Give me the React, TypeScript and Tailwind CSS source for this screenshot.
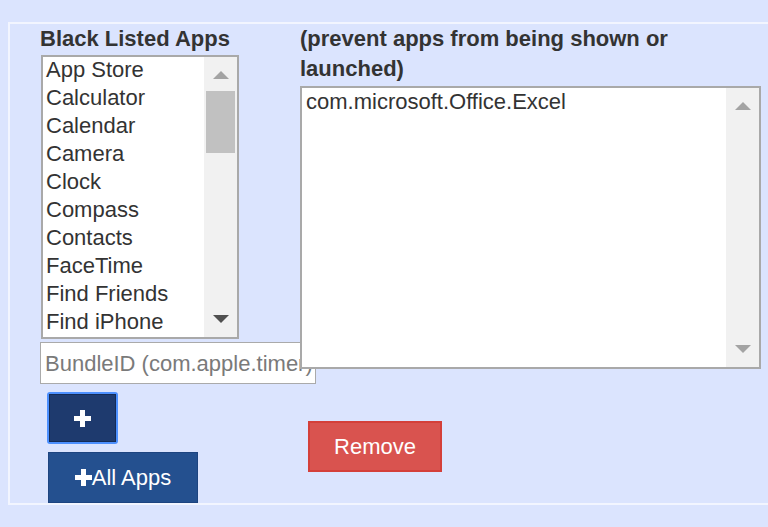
import React from "react";

const apps = [
  "App Store",
  "Calculator",
  "Calendar",
  "Camera",
  "Clock",
  "Compass",
  "Contacts",
  "FaceTime",
  "Find Friends",
  "Find iPhone",
];

function Arrow({ up, dark }: { up?: boolean; dark?: boolean }) {
  return (
    <svg width="16" height="8" viewBox="0 0 16 8" className="block">
      <polygon
        points={up ? "8,0 16,8 0,8" : "0,0 16,0 8,8"}
        fill={dark ? "#505050" : "#a3a3a3"}
      />
    </svg>
  );
}

function PlusGlyph() {
  return (
    <svg width="17" height="17" viewBox="0 0 17 17" className="block shrink-0">
      <rect x="6" y="0" width="5" height="17" fill="#fff" />
      <rect x="0" y="6" width="17" height="5" fill="#fff" />
    </svg>
  );
}

function Scrollbar({ thumb, downDark }: { thumb?: boolean; downDark?: boolean }) {
  return (
    <div className="flex w-[33px] flex-none flex-col bg-[#f1f1f1]">
      <div className="flex h-[34px] items-start justify-center pt-[14px]">
        <Arrow up />
      </div>
      {thumb ? <div className="mx-[2px] h-[62px] bg-[#c1c1c1]" /> : null}
      <div className="flex-1" />
      <div className="flex h-[34px] items-end justify-center pb-[14px]">
        <Arrow dark={downDark} />
      </div>
    </div>
  );
}

export default function App() {
  return (
    <div className="min-h-[527px] overflow-hidden bg-[#dbe4fe] pl-[8px] pt-[22px] font-['Liberation_Sans',Arial,sans-serif] text-[22px] text-[#333]">
      <div className="flex h-[483px] w-[800px] border-2 border-r-0 border-[#f2f5ff] pl-[30px]">
        {/* left column */}
        <div className="flex w-[260px] flex-none flex-col">
          <div className="h-[30px] whitespace-nowrap font-bold leading-[30px]">Black Listed Apps</div>
          <div className="ml-[1px] mt-[1px] flex h-[284px] w-[198px] border-2 border-[#a9a9a9] bg-white">
            <div className="flex-1 overflow-hidden pl-[3px]">
              {apps.map((a) => (
                <div key={a} className="h-[28px] whitespace-nowrap leading-[26px]">
                  {a}
                </div>
              ))}
            </div>
            <Scrollbar thumb downDark />
          </div>
          <div className="mt-[3px] flex h-[42px] w-[276px] items-center overflow-hidden whitespace-nowrap border border-[#aaa] bg-white pl-[4px] text-[#7a7a7a]">
            BundleID (com.apple.timer)
          </div>
          <div className="ml-[7px] mt-[8px] h-[52px] w-[71px] rounded-[3px] border-2 border-[#4d90fe]">
            <div className="flex h-full w-full items-center justify-center border border-[#142b55] bg-[#1e3a6e]">
              <PlusGlyph />
            </div>
          </div>
          <div className="ml-[8px] mt-[8px] flex h-[51px] w-[150px] items-center justify-center border border-[#1d4480] bg-[#24508f] text-white">
            <PlusGlyph />
            <span>All Apps</span>
          </div>
        </div>

        {/* right column */}
        <div className="flex w-[461px] flex-none flex-col">
          <div className="font-bold leading-[30px]">
            (prevent apps from being shown or launched)
          </div>
          <div className="mt-[2px] flex h-[283px] w-[461px] border-2 border-[#a9a9a9] bg-white">
            <div className="flex-1 pl-[4px] pt-[1px]">
              <div className="h-[28px] leading-[26px]">com.microsoft.Office.Excel</div>
            </div>
            <Scrollbar />
          </div>
          <div className="ml-[8px] mt-[52px] flex h-[51px] w-[134px] items-center justify-center border-2 border-[#d43f3a] bg-[#d9534f] text-white">
            Remove
          </div>
        </div>
      </div>
    </div>
  );
}
